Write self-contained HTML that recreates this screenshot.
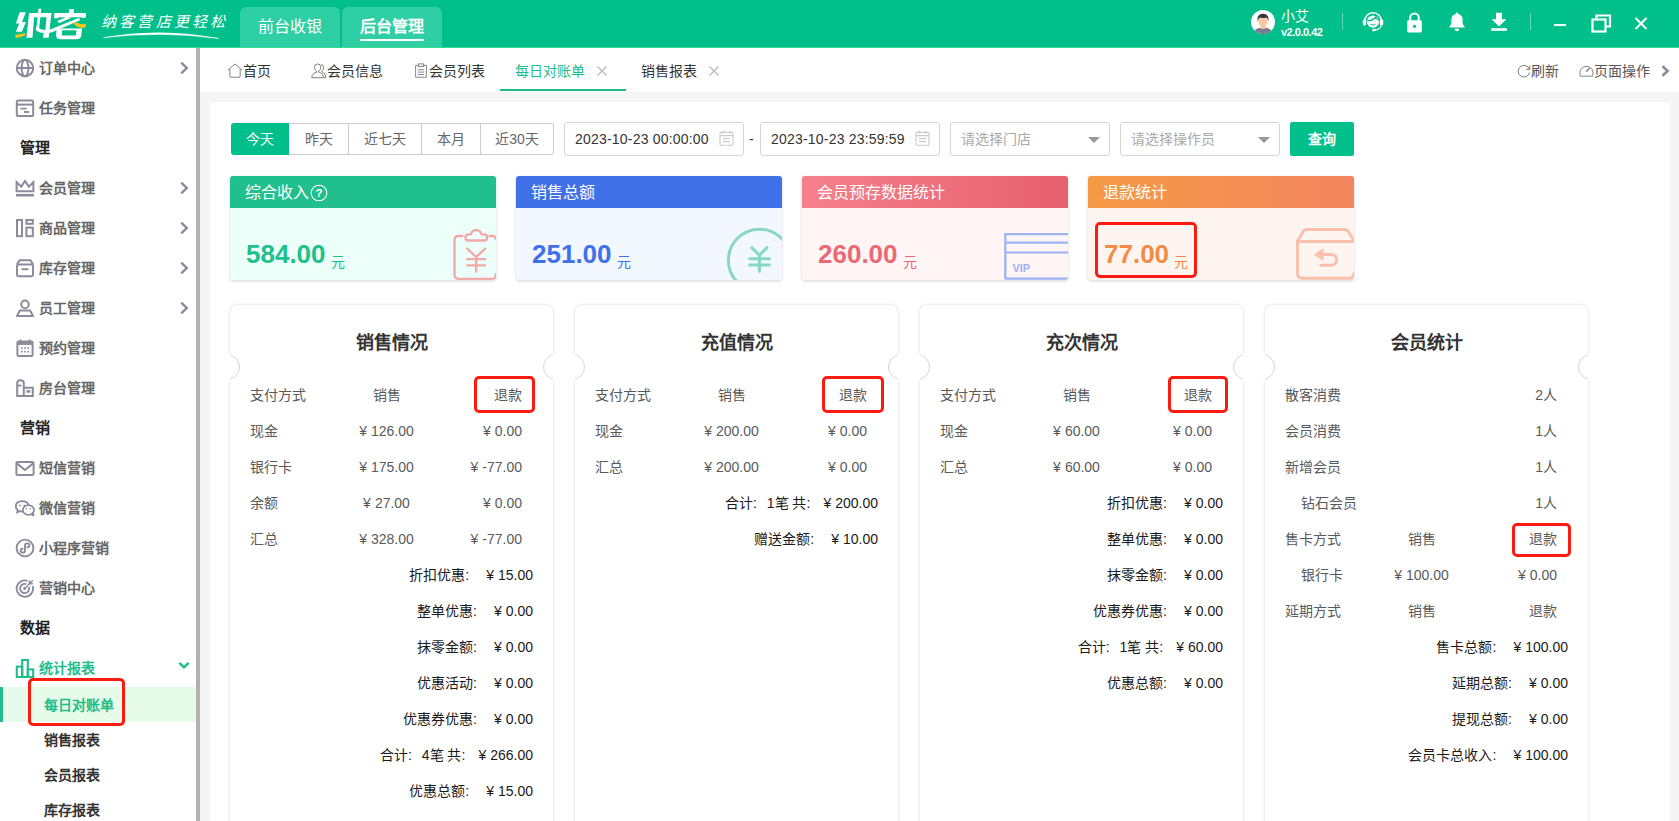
<!DOCTYPE html>
<html lang="zh-CN">
<head>
<meta charset="utf-8">
<title>每日对账单</title>
<style>
*,*:before,*:after{box-sizing:border-box;margin:0;padding:0}
html,body{width:1679px;height:821px;overflow:hidden;background:#f5f5f5}
body{font-family:"Liberation Sans",sans-serif;font-size:14px;color:#333;position:relative}
svg{display:block}
.abs{position:absolute}

/* ===== header ===== */
#hdr{position:absolute;left:0;top:0;width:1679px;height:48px;background:#00bf8a;border-bottom:1px solid #35dd8c}
#logo{position:absolute}
#slogan{position:absolute}
.htab{position:absolute;top:7px;height:40px;width:100px;background:#2ecfa4;border-radius:6px 6px 0 0;color:#fff;font-size:16px;line-height:40px;text-align:center}
.htab b{display:inline-block;position:relative}
.htab b:after{content:"";position:absolute;left:0;right:0;top:32px;height:2px;background:#fff}
#uname{position:absolute;left:1281px;top:6.5px;font-size:14px;line-height:18px;color:#fff}
#uver{position:absolute;left:1281px;top:25px;font-size:11px;line-height:14px;color:#fff;letter-spacing:-0.5px;font-weight:bold}
.hsep{position:absolute;top:13px;width:1px;height:17px;background:#5fd8b6}

/* ===== sidebar ===== */
#side{position:absolute;left:0;top:48px;width:196px;height:773px;background:#fff;overflow:hidden}
#sbar{position:absolute;left:196px;top:48px;width:4px;height:773px;background:#b2b2b2}
.mi{position:absolute;left:0;width:196px;height:40px;line-height:40px;font-size:14px;font-weight:bold;color:#666}
.mi span{position:absolute;left:39px;top:0;white-space:nowrap}
.mi svg.ic{position:absolute;left:15px;top:10px;width:20px;height:20px}
.mi svg.ch{position:absolute;left:179px;top:13px;width:10px;height:14px}
.mh{position:absolute;left:20px;height:40px;line-height:40px;font-size:15px;font-weight:bold;color:#222}
.si{position:absolute;left:0;width:196px;height:35px;line-height:35px;font-size:14px;font-weight:bold;color:#333}
.si span{position:absolute;left:44px;top:0;white-space:nowrap}
.si.on{background:#e6fbe9;color:#1fbd8a}
.si.on:before{content:"";position:absolute;left:0;top:0;width:3px;height:35px;background:#1fbd8a}
.redbox{position:absolute;border:3px solid #fd1b0f;border-radius:5px}

/* ===== tab bar ===== */
#tabs{position:absolute;left:200px;top:48px;width:1479px;height:44px;background:#fff}
.tb{position:absolute;top:0;height:44px;line-height:46px;font-size:14px;color:#333;white-space:nowrap}
.tb.on{color:#1fbd8a}
.tb svg{position:absolute}
.tr{color:#555}

/* ===== main panel ===== */
#main{position:absolute;left:210px;top:102px;width:1460px;height:719px;background:#fff}
/* filter bar */
.bg{position:absolute;left:21px;top:21px;height:32px;display:flex}
.bg div{height:32px;line-height:30px;text-align:center;font-size:14px;color:#666;border:1px solid #ccc;border-left:none;background:#fff}
.bg div:first-child{border:none;background:#00bf8a;color:#fff;line-height:32px;border-radius:3px 0 0 3px}.bg div:last-child{border-radius:0 3px 3px 0}
.inp{position:absolute;top:20px;height:34px;border:1px solid #d4d4d4;border-radius:3px;background:#fff;font-size:14px;line-height:33px;color:#333;padding-left:10px;white-space:nowrap;letter-spacing:0.2px}
.inp.ph{color:#aaa;letter-spacing:0}
.inp svg{position:absolute}
.tri{position:absolute;right:9px;top:14px;width:0;height:0;border-left:6px solid transparent;border-right:6px solid transparent;border-top:6px solid #999}
#qbtn{position:absolute;left:1080px;top:20px;width:64px;height:34px;background:#00bf8a;color:#fff;font-size:14px;font-weight:bold;line-height:35px;text-align:center;border-radius:2px}

/* stat cards */
.card{position:absolute;top:74px;width:266px;height:104px;border-radius:3px;overflow:hidden;box-shadow:0 1px 3px rgba(0,0,0,0.18)}
.card .ch{height:32px;line-height:34px;padding-left:15px;font-size:16px;color:#fff;position:relative}
.card .val{position:absolute;left:16px;top:60px;font-size:26px;font-weight:bold;line-height:36px;white-space:nowrap}
.card .val i{font-style:normal;font-weight:normal;font-size:14px;margin-left:5px;position:relative;top:4px}
.card svg.ci{position:absolute}

/* panels */
.pn{position:absolute;top:203px;width:323px;height:540px;background:#fff;border-radius:7px;box-shadow:0 0 2px 1px rgba(0,0,0,0.09)}
.pn h3{position:absolute;left:0;top:24px;width:100%;text-align:center;font-size:18px;line-height:28px;font-weight:bold;color:#333}
.nt{position:absolute;top:49px;width:26px;height:26px}
.nt:before{content:"";position:absolute;left:0;top:0;width:26px;height:26px;border-radius:50%;border:1px solid #d6d6d6;background:#fff}
.nt:after{content:"";position:absolute;top:-1px;width:17px;height:28px;background:#fff}
.nt.l{left:-16px}.nt.l:after{left:-2px;width:18px}
.nt.r{right:-16px}.nt.r:after{right:-2px;width:18px}
.rw{position:absolute;left:0;width:323px;height:36px;line-height:36px;font-size:14px;color:#5a5a5a;white-space:nowrap}
.rw .a{position:absolute;left:20px}
.rw .a.in{left:36px}
.rw .b{position:absolute;left:56.5px;width:200px;text-align:center}
.rw .c{position:absolute;right:31px;text-align:right}
.sm{position:absolute;right:20px;height:36px;line-height:36px;font-size:14px;color:#1a1a1a;white-space:nowrap;text-align:right}
.sm u{text-decoration:none;display:inline-block;width:17px}
y{margin-right:4px}
</style>
</head>
<body>

<!-- ================= HEADER ================= -->
<div id="hdr">
  <svg id="logo" style="left:5px;top:0;width:120px;height:48px" viewBox="0 0 1680 672">
    <g fill="#fff">
      <!-- 纟 zigzag -->
      <path d="M205 172 L292 172 L238 308 L292 308 L236 446 L152 446 L200 330 L152 330 Z"/>
      <!-- 内 left leg -->
      <path d="M338 182 L412 182 L384 528 L300 528 Z"/>
      <!-- 内 top bar -->
      <path d="M338 182 L650 182 L645 242 L334 242 Z"/>
      <!-- 内 right leg -->
      <path d="M588 182 L650 182 L612 528 L532 528 L536 470 L560 470 Z"/>
      <!-- 内 centre stroke -->
      <path d="M468 124 L508 124 L478 400 L440 410 Z"/>
      <!-- shared swoosh 人 / 夂 -->
      <path d="M440 372 Q520 440 640 410 L1040 250 L1050 285 L660 450 Q520 490 430 420 Z"/>
      <!-- 宀 dot -->
      <path d="M898 128 L966 128 L960 190 L892 190 Z"/>
      <!-- 宀 roof -->
      <path d="M690 182 L1136 182 L1130 250 L1068 250 L1072 240 L752 240 L748 256 L686 256 Z"/>
      <!-- 夂 short stroke -->
      <path d="M860 236 L930 250 L760 322 L728 296 Z"/>
      <!-- 口 -->
      <path d="M722 398 L1078 398 L1068 500 Q1060 548 1000 548 L780 548 Q716 548 716 500 Z M800 424 L796 496 L992 496 L1000 424 Z" fill-rule="evenodd"/>
    </g>
    <path d="M140 488 Q210 486 286 462 L282 492 Q215 528 150 532 Z" fill="#f9c21a"/>
    <path d="M958 326 Q985 308 1020 322 Q1070 348 1136 334 L1126 386 Q1060 400 1010 372 Q985 356 958 326 Z" fill="#f9c21a"/>
  </svg>
  <svg id="slogan" style="left:98px;top:0;width:132px;height:48px" viewBox="98 0 132 48">
    <text x="101" y="26.5" font-family="Liberation Serif, serif" font-size="15" font-style="italic" fill="#fff" textLength="124" lengthAdjust="spacing">纳客营店更轻松</text>
    <path d="M103.6 37.6 Q160 27.6 218.8 38.4 Q160 30.8 103.6 37.6z" fill="#fff" stroke="#fff" stroke-width="0.5"/>
  </svg>
  <div class="htab" style="left:240px">前台收银</div>
  <div class="htab" style="left:342px"><b>后台管理</b></div>

  <!-- avatar -->
  <svg class="abs" style="left:1251px;top:10px" width="24" height="24" viewBox="0 0 24 24">
    <defs><clipPath id="avc"><circle cx="12" cy="12" r="12"/></clipPath></defs>
    <circle cx="12" cy="12" r="12" fill="#fdfdfd"/>
    <g clip-path="url(#avc)">
      <path d="M2 26 q0 -8.4 10 -8.4 q10 0 10 8.4z" fill="#777a90"/>
      <rect x="9.8" y="14" width="4.4" height="5" fill="#efbd93"/>
      <ellipse cx="12" cy="11.4" rx="4.7" ry="5.3" fill="#f6c9a2"/>
      <path d="M6.6 11.4 q-1 -7.6 5.4 -7.6 q6.4 0 5.4 7.6 q-0.8 -3.4 -2 -4 q-3.4 1.2 -6.4 0.2 q-1.4 0.8 -2.4 3.8z" fill="#36343a"/>
    </g>
  </svg>
  <div id="uname">小艾</div>
  <div id="uver">v2.0.0.42</div>
  <div class="hsep" style="left:1342px"></div>
  <div class="hsep" style="left:1530px"></div>

  <!-- headset -->
  <svg class="abs" style="left:1362px;top:10px" width="22" height="23" viewBox="0 0 22 23">
    <path d="M2.6 11.2 a8.4 8.4 0 0 1 16.8 0" fill="none" stroke="#fff" stroke-width="1.6"/>
    <rect x="0.8" y="9.2" width="3.4" height="6.4" rx="1.5" fill="#fff"/>
    <rect x="17.8" y="9.2" width="3.4" height="6.4" rx="1.5" fill="#fff"/>
    <path d="M19.4 15 q-0.6 4.4 -6.4 5" fill="none" stroke="#fff" stroke-width="1.3"/>
    <ellipse cx="11.8" cy="20.1" rx="1.7" ry="1.3" fill="#fff"/>
    <circle cx="11" cy="11.6" r="6.1" fill="#fff"/>
    <path d="M5.2 10.6 q5.2 0.6 8.6 -3.6 q1.4 2.6 3 3.4" fill="none" stroke="#00bf8a" stroke-width="1.2"/>
    <path d="M9 14.4 q2 1.4 4 0" fill="none" stroke="#00bf8a" stroke-width="1.1" stroke-linecap="round"/>
  </svg>
  <!-- lock -->
  <svg class="abs" style="left:1406px;top:12px" width="17" height="21" viewBox="0 0 17 21">
    <path d="M4.2 9 v-3.2 a4.3 4.3 0 0 1 8.6 0 v3.2" fill="none" stroke="#fff" stroke-width="2"/>
    <rect x="1.2" y="8.2" width="14.6" height="12.3" rx="1.6" fill="#fff"/>
    <circle cx="8.5" cy="14.3" r="1.6" fill="#00bf8a"/>
  </svg>
  <!-- bell -->
  <svg class="abs" style="left:1448px;top:12px" width="18" height="20" viewBox="0 0 18 20">
    <path d="M9 0.6 a1.3 1.3 0 0 1 1.3 1.5 a5.6 5.6 0 0 1 4.3 5.6 v4.3 l2 2.6 v1 h-15.2 v-1 l2 -2.6 v-4.3 a5.6 5.6 0 0 1 4.3 -5.6 a1.3 1.3 0 0 1 1.3 -1.5z" fill="#fff"/>
    <path d="M6.6 16.8 h4.8 a2.4 2.4 0 0 1 -4.8 0z" fill="#fff"/>
  </svg>
  <!-- download -->
  <svg class="abs" style="left:1490px;top:12px" width="18" height="20" viewBox="0 0 18 20">
    <path d="M6 0.8 h6 v6.4 h4.4 l-7.4 7.2 l-7.4 -7.2 h4.4z" fill="#fff"/>
    <rect x="1.2" y="16.2" width="15.6" height="2.6" fill="#fff"/>
  </svg>
  <!-- window controls -->
  <div class="abs" style="left:1554px;top:24px;width:12px;height:2px;background:#fff"></div>
  <svg class="abs" style="left:1590.5px;top:13.5px" width="21" height="19" viewBox="0 0 21 19">
    <path d="M5.5 4.5 v-3 h13.5 v11 h-4" fill="none" stroke="#fff" stroke-width="2.2"/>
    <rect x="1.5" y="5.5" width="13" height="12" fill="none" stroke="#fff" stroke-width="2.2"/>
  </svg>
  <svg class="abs" style="left:1633.6px;top:17px" width="14" height="13" viewBox="0 0 14 13">
    <path d="M1.5 1 L12.5 12 M12.5 1 L1.5 12" stroke="#fff" stroke-width="2" fill="none"/>
  </svg>
</div>

<!-- ================= SIDEBAR ================= -->
<div id="side">
<svg width="0" height="0" style="position:absolute"><defs>
  <symbol id="chev" viewBox="0 0 10 14"><path d="M2.2 1.6 L7.8 7 L2.2 12.4" fill="none" stroke="#8b8b9c" stroke-width="2.4"/></symbol>
</defs></svg>

<div class="mi" style="top:0"><svg class="ic" viewBox="0 0 20 20" fill="none" stroke="#8b8b9c" stroke-width="2"><circle cx="10" cy="10" r="8.2"/><ellipse cx="10" cy="10" rx="3.4" ry="8.2"/><path d="M1.8 10 H18.2"/></svg><span>订单中心</span><svg class="ch"><use href="#chev"/></svg></div>

<div class="mi" style="top:40px"><svg class="ic" viewBox="0 0 20 20" fill="none" stroke="#8b8b9c" stroke-width="2"><rect x="1.8" y="2.4" width="16.4" height="15.6" rx="1.6"/><path d="M1.8 6.6 H18.2"/><path d="M5.4 10.6 H11.6 M9 14 H14.2" stroke-width="1.9"/></svg><span>任务管理</span></div>

<div class="mh" style="top:80px">管理</div>

<div class="mi" style="top:120px"><svg class="ic" viewBox="0 0 20 20" fill="none" stroke="#8b8b9c" stroke-width="2"><path d="M1.6 13.2 V4.2 L6.2 8.6 L10 3 L13.8 8.6 L18.4 4.2 V13.2 Z" stroke-linejoin="miter"/><path d="M1 17.2 H19" stroke-width="2.6"/></svg><span>会员管理</span><svg class="ch"><use href="#chev"/></svg></div>

<div class="mi" style="top:160px"><svg class="ic" viewBox="0 0 20 20" fill="none" stroke="#8b8b9c" stroke-width="2"><rect x="2" y="2" width="5" height="16.2"/><rect x="11.4" y="2" width="6.4" height="3.8"/><rect x="11.4" y="9.6" width="6.4" height="8.6"/></svg><span>商品管理</span><svg class="ch"><use href="#chev"/></svg></div>

<div class="mi" style="top:200px"><svg class="ic" viewBox="0 0 20 20" fill="none" stroke="#8b8b9c" stroke-width="2"><path d="M2 6.4 L4.6 2.2 H15.4 L18 6.4"/><rect x="2" y="6.4" width="16" height="11.8" rx="1.4"/><path d="M6.6 11.2 H13.4" stroke-width="1.9"/></svg><span>库存管理</span><svg class="ch"><use href="#chev"/></svg></div>

<div class="mi" style="top:240px"><svg class="ic" viewBox="0 0 20 20" fill="none" stroke="#8b8b9c" stroke-width="2"><circle cx="10" cy="6.4" r="3.8"/><path d="M2 18 L4.8 12.6 H15.2 L18 18 Z" stroke-linejoin="round"/></svg><span>员工管理</span><svg class="ch"><use href="#chev"/></svg></div>

<div class="mi" style="top:280px"><svg class="ic" viewBox="0 0 20 20" fill="none" stroke="#8b8b9c" stroke-width="2"><rect x="2.4" y="3.6" width="15.2" height="14.4" rx="1.2"/><path d="M2.4 5.4 H17.6" stroke-width="3"/><path d="M5.4 1.4 V4 M14.6 1.4 V4" stroke-width="1.8"/><path d="M6 10.2 h1.6 M9.2 10.2 h1.6 M12.4 10.2 h1.6 M6 13.6 h1.6 M9.2 13.6 h1.6 M12.4 13.6 h1.6" stroke-width="1.7"/></svg><span>预约管理</span></div>

<div class="mi" style="top:320px"><svg class="ic" viewBox="0 0 20 20" fill="none" stroke="#8b8b9c" stroke-width="2"><path d="M2.2 18 V5 Q2.2 2.2 5.4 2.2 Q8.8 2.2 8.8 5 V18 Z"/><path d="M2.2 7.6 H6.4"/><path d="M8.8 9.8 H17.8 V18 H8.8"/><path d="M11.4 13.4 h4" stroke-width="2.6"/></svg><span>房台管理</span></div>

<div class="mh" style="top:360px">营销</div>

<div class="mi" style="top:400px"><svg class="ic" viewBox="0 0 20 20" fill="none" stroke="#8b8b9c" stroke-width="2"><rect x="1.4" y="4" width="17.2" height="13" rx="1.2"/><path d="M1.8 5.4 L10 12 L18.2 5.4"/></svg><span>短信营销</span></div>

<div class="mi" style="top:440px"><svg class="ic" viewBox="0 0 20 20" fill="none" stroke="#8b8b9c" stroke-width="1.8"><path d="M8.2 13.6 Q6.6 13.8 4.6 13.2 L2.2 14.4 L2.8 12.2 Q0.8 10.6 0.8 8.4 Q0.8 3.4 7.4 3.2 Q12.4 3.4 13.6 7"/><ellipse cx="13.4" cy="12" rx="5.6" ry="4.8"/><path d="M16.4 16.2 L18.6 17.4 L18 15.2" stroke-linejoin="round"/><path d="M5 7.4 v0.4 M9.4 7.4 v0.4" stroke-width="1.6" stroke-linecap="round"/><path d="M11.4 10.8 v0.3 M15.4 10.8 v0.3" stroke-width="1.4" stroke-linecap="round"/></svg><span>微信营销</span></div>

<div class="mi" style="top:480px"><svg class="ic" viewBox="0 0 20 20" fill="none" stroke="#8b8b9c" stroke-width="1.9"><circle cx="10" cy="10" r="8.4"/><path d="M10 7.8 V12.4 Q10 14.6 7.8 14.6 Q5.6 14.6 5.6 12.6 Q5.6 10.8 7.6 10.8 M10 12.2 V7.6 Q10 5.4 12.2 5.4 Q14.4 5.4 14.4 7.4 Q14.4 9.2 12.4 9.2" stroke-linecap="round"/></svg><span>小程序营销</span></div>

<div class="mi" style="top:520px"><svg class="ic" viewBox="0 0 20 20" fill="none" stroke="#8b8b9c" stroke-width="1.9"><path d="M17.6 8 A8.2 8.2 0 1 1 12.4 2.8"/><path d="M14 9 A4.6 4.6 0 1 1 11.2 6.2"/><circle cx="9.6" cy="10.6" r="1.5" fill="#8b8b9c" stroke="none"/><path d="M9.8 10.4 L17.8 2.2 M14.4 2.4 V5.8 H17.8" stroke-width="1.5"/></svg><span>营销中心</span></div>

<div class="mh" style="top:560px">数据</div>

<div class="mi" style="top:600px;color:#1fbd8a"><svg class="ic" viewBox="0 0 20 20" fill="none" stroke="#1fbd8a" stroke-width="2.1"><rect x="1.8" y="8.6" width="5.4" height="10.4"/><rect x="7.2" y="2" width="5.6" height="17"/><rect x="12.8" y="11.4" width="5.4" height="7.6"/></svg><span>统计报表</span><svg class="ch" style="left:178px;top:13px;width:12px;height:9px" viewBox="0 0 12 9"><path d="M1.4 1.8 L6 6.4 L10.6 1.8" fill="none" stroke="#1fbd8a" stroke-width="2.4"/></svg></div>

<div class="si on" style="top:639px"><span style="top:1px">每日对账单</span></div>
<div class="si" style="top:675px"><span>销售报表</span></div>
<div class="si" style="top:710px"><span>会员报表</span></div>
<div class="si" style="top:745px"><span>库存报表</span></div>
<div class="redbox" style="left:28px;top:630px;width:97px;height:48px"></div>

</div>
<div id="sbar"></div>

<!-- ================= TAB BAR ================= -->
<div id="tabs">

<div class="tb" style="left:43px">首页<svg style="left:-16.5px;top:15px" width="16" height="15" viewBox="0 0 17 16" fill="none" stroke="#7a7a7a" stroke-width="1"><path d="M1 7.6 L8.5 1 L16 7.6"/><path d="M3 6.4 V14.2 Q3 15.2 4 15.2 H13 Q14 15.2 14 14.2 V6.4"/></svg></div>
<div class="tb" style="left:127px">会员信息<svg style="left:-16.5px;top:14.5px" width="16" height="16" viewBox="0 0 17 17" fill="none" stroke="#7a7a7a" stroke-width="1"><path d="M6.6 9.4 Q3.6 7.4 3.6 4.6 Q3.6 1 7 1 Q10.4 1 10.4 4.6 Q10.4 7.4 7.6 9.4 M6.6 9.4 Q1 10.6 0.8 15.6 H13.2 Q13 10.6 7.6 9.4"/><path d="M10.6 1.6 Q13.6 1.8 13.4 5.2 Q13.2 7.6 11.4 9.2 Q15.6 10.4 15.8 15.6 H13.4"/></svg></div>
<div class="tb" style="left:229px">会员列表<svg style="left:-15.5px;top:15px" width="14" height="15.5" viewBox="0 0 15 17" fill="none" stroke="#7a7a7a" stroke-width="1"><path d="M4.4 2.6 H1.6 V15.6 H13.4 V2.6 H10.6"/><rect x="4.6" y="1" width="5.8" height="3"/><path d="M4.2 7.4 H10.8 M4.2 10 H10.8 M4.2 12.6 H10.8"/></svg></div>
<div class="tb on" style="left:315px">每日对账单<svg style="left:81px;top:17px" width="12" height="12" viewBox="0 0 12 12"><path d="M1.5 1.5 L10.5 10.5 M10.5 1.5 L1.5 10.5" stroke="#b4b4b4" stroke-width="1.1" fill="none"/></svg></div>
<div class="abs" style="left:300px;top:41px;width:126px;height:2px;background:#1fbd8a"></div>
<div class="tb" style="left:441px">销售报表<svg style="left:67px;top:17px" width="12" height="12" viewBox="0 0 12 12"><path d="M1.5 1.5 L10.5 10.5 M10.5 1.5 L1.5 10.5" stroke="#b4b4b4" stroke-width="1.1" fill="none"/></svg></div>

<div class="tb tr" style="left:1331px">刷新<svg style="left:-14px;top:16px" width="14" height="14" viewBox="0 0 14 14" fill="none" stroke="#7a7a7a" stroke-width="1"><path d="M12.4 5.2 A5.8 5.8 0 1 0 12.6 8.6"/><path d="M12.8 1.6 V5.4 H9.2"/></svg></div>
<div class="tb tr" style="left:1394px">页面操作<svg style="left:-15px;top:15px" width="15" height="14" viewBox="0 0 15 14" fill="none" stroke="#7a7a7a" stroke-width="1"><path d="M1.4 12.6 A6.6 6.6 0 1 1 13.6 12.6"/><path d="M0.6 13.2 H14.4" stroke="#aaa" stroke-width="1.4"/><path d="M7.2 8.8 L10.6 5.2" stroke-width="1.3"/></svg></div>
<svg class="abs" style="left:1460px;top:16px" width="10" height="14" viewBox="0 0 10 14"><path d="M2.4 2.2 L7.6 7 L2.4 11.8" fill="none" stroke="#8b8b9c" stroke-width="2.6"/></svg>

</div>

<!-- ================= MAIN ================= -->
<div id="main">
<!-- filter bar -->
<div class="bg"><div style="width:58px">今天</div><div style="width:60px">昨天</div><div style="width:73px">近七天</div><div style="width:59px">本月</div><div style="width:73px">近30天</div></div>
<div class="inp" style="left:354px;width:180px">2023-10-23 00:00:00<svg style="left:154px;top:7px" width="15" height="16" viewBox="0 0 15 16" fill="none" stroke="#cacaca" stroke-width="1.1"><rect x="1" y="2.4" width="13" height="12.8" rx="1"/><path d="M1 5.6 H14 M4.2 0.8 V3.6 M10.8 0.8 V3.6 M4 8.6 H11 M4 11.6 H11"/></svg></div>
<div class="abs" style="left:539px;top:28px;font-size:14px;line-height:18px;color:#333">-</div>
<div class="inp" style="left:550px;width:180px">2023-10-23 23:59:59<svg style="left:154px;top:7px" width="15" height="16" viewBox="0 0 15 16" fill="none" stroke="#cacaca" stroke-width="1.1"><rect x="1" y="2.4" width="13" height="12.8" rx="1"/><path d="M1 5.6 H14 M4.2 0.8 V3.6 M10.8 0.8 V3.6 M4 8.6 H11 M4 11.6 H11"/></svg></div>
<div class="inp ph" style="left:740px;width:160px">请选择门店<span class="tri"></span></div>
<div class="inp ph" style="left:910px;width:160px">请选择操作员<span class="tri"></span></div>
<div id="qbtn">查询</div>

<!-- stat cards -->
<div class="card" style="left:20px;background:#ecfff9">
  <div class="ch" style="background:#21bf8b">综合收入<svg class="abs" style="left:80px;top:8px" width="18" height="18" viewBox="0 0 18 18"><circle cx="9" cy="9" r="7.8" fill="none" stroke="#fff" stroke-width="1.1"/><text x="9" y="13.2" text-anchor="middle" font-family="Liberation Sans, sans-serif" font-size="11.5" font-weight="bold" fill="#fff">?</text></svg></div>
  <div class="val" style="color:#21bf8b">584.00<i>元</i></div>
  <svg class="ci" style="left:0;top:0" width="266" height="104" viewBox="0 0 266 104" fill="none" stroke="#f1a9ab" stroke-width="2.3" stroke-linecap="round" stroke-linejoin="round"><path d="M232.4 60 H228.6 Q224.5 60 224.5 64.2 V98.8 Q224.5 102.8 228.6 102.8 H262 Q266 102.8 266 98"/><path d="M259.4 60 H262.4 Q265.6 60 265.8 63"/><path d="M238.4 64.5 H254 Q257.2 64.5 257.2 61.4 Q257.2 58.4 253.6 58.4 H251.4 Q250.6 54.2 246.2 54.2 Q241.8 54.2 241 58.4 H238.8 Q235.4 58.4 235.4 61.4 Q235.4 64.5 238.4 64.5 Z"/><path d="M237.2 72.6 L246.2 81.2 L255.2 72.6 M246.2 81.2 V95.8 M237.2 83.2 H255.2 M237.2 89.4 H255.2"/></svg>
</div>
<div class="card" style="left:306px;background:#f3f7ff">
  <div class="ch" style="background:#3f70e8">销售总额</div>
  <div class="val" style="color:#3f70e8">251.00<i>元</i></div>
  <svg class="ci" style="left:0;top:0" width="266" height="104" viewBox="0 0 266 104" fill="none" stroke="#86d9c0" stroke-width="3" stroke-linecap="round" stroke-linejoin="round"><circle cx="243.4" cy="84.2" r="31"/><path d="M235.8 71.6 L243.4 79.2 L251 71.6 M243.4 79.2 V95.2 M233.6 82.7 H253.4 M233.6 89.1 H253.4"/></svg>
</div>
<div class="card" style="left:592px;background:#fff5f5">
  <div class="ch" style="background:linear-gradient(90deg,#f5808c,#e6606e)">会员预存数据统计</div>
  <div class="val" style="color:#ea6977">260.00<i>元</i></div>
  <svg class="ci" style="left:0;top:0" width="266" height="104" viewBox="0 0 266 104" fill="none" stroke="#9db2f1" stroke-width="2.2" stroke-linejoin="round"><path d="M270 58.1 H203.3 V102.7 H270"/><path d="M203.3 66.7 H270 M203.3 76.5 H270"/><text x="210.6" y="95.8" font-family="Liberation Sans, sans-serif" font-size="10.5" font-weight="bold" fill="#9db2f1" stroke="none" textLength="17.5" lengthAdjust="spacingAndGlyphs">VIP</text></svg>
</div>
<div class="card" style="left:878px;background:#fff5f0">
  <div class="ch" style="background:linear-gradient(90deg,#f59a46,#f2855f)">退款统计</div>
  <div class="val" style="color:#f28b48">77.00<i>元</i></div>
  <svg class="ci" style="left:0;top:0" width="266" height="104" viewBox="0 0 266 104" fill="none" stroke="#f9c1ad" stroke-width="3" stroke-linecap="round" stroke-linejoin="round"><path d="M209.5 65 L215.4 55.2 Q216.6 53.5 218.6 53.5 H256.8 Q258.8 53.5 260 55.2 L266.5 65.4"/><path d="M209.5 65.4 H270"/><path d="M209.5 65 V97.6 Q209.5 102.3 214.2 102.3 H261 Q266 102.3 266 97"/><path d="M234.4 78.4 H243.3 A5.4 5.4 0 0 1 243.3 89.2 H232.8"/><path d="M226.8 78.4 L235 73 V83.8 Z" fill="#f9c1ad" stroke-width="1"/></svg>
</div>
<div class="redbox" style="left:885px;top:120px;width:102px;height:56px"></div>

<div class="pn" style="left:20px"><h3>销售情况</h3><div class="nt l"></div><div class="nt r"></div>
<div class="rw" style="top:72px"><span class="a">支付方式</span><span class="b">销售</span><span class="c">退款</span></div>
<div class="rw" style="top:108px"><span class="a">现金</span><span class="b"><y>¥</y>126.00</span><span class="c"><y>¥</y>0.00</span></div>
<div class="rw" style="top:144px"><span class="a">银行卡</span><span class="b"><y>¥</y>175.00</span><span class="c"><y>¥</y>-77.00</span></div>
<div class="rw" style="top:180px"><span class="a">余额</span><span class="b"><y>¥</y>27.00</span><span class="c"><y>¥</y>0.00</span></div>
<div class="rw" style="top:216px"><span class="a">汇总</span><span class="b"><y>¥</y>328.00</span><span class="c"><y>¥</y>-77.00</span></div>
<div class="sm" style="top:252px">折扣优惠:<u></u><y>¥</y>15.00</div>
<div class="sm" style="top:288px">整单优惠:<u></u><y>¥</y>0.00</div>
<div class="sm" style="top:324px">抹零金额:<u></u><y>¥</y>0.00</div>
<div class="sm" style="top:360px">优惠活动:<u></u><y>¥</y>0.00</div>
<div class="sm" style="top:396px">优惠券优惠:<u></u><y>¥</y>0.00</div>
<div class="sm" style="top:432px">合计:<u style="width:10px"></u>4笔 共:<u style="width:13px"></u><y>¥</y>266.00</div>
<div class="sm" style="top:468px">优惠总额:<u></u><y>¥</y>15.00</div>
</div>
<div class="pn" style="left:365px"><h3>充值情况</h3><div class="nt l"></div><div class="nt r"></div>
<div class="rw" style="top:72px"><span class="a">支付方式</span><span class="b">销售</span><span class="c">退款</span></div>
<div class="rw" style="top:108px"><span class="a">现金</span><span class="b"><y>¥</y>200.00</span><span class="c"><y>¥</y>0.00</span></div>
<div class="rw" style="top:144px"><span class="a">汇总</span><span class="b"><y>¥</y>200.00</span><span class="c"><y>¥</y>0.00</span></div>
<div class="sm" style="top:180px">合计:<u style="width:10px"></u>1笔 共:<u style="width:13px"></u><y>¥</y>200.00</div>
<div class="sm" style="top:216px">赠送金额:<u></u><y>¥</y>10.00</div>
</div>
<div class="pn" style="left:710px"><h3>充次情况</h3><div class="nt l"></div><div class="nt r"></div>
<div class="rw" style="top:72px"><span class="a">支付方式</span><span class="b">销售</span><span class="c">退款</span></div>
<div class="rw" style="top:108px"><span class="a">现金</span><span class="b"><y>¥</y>60.00</span><span class="c"><y>¥</y>0.00</span></div>
<div class="rw" style="top:144px"><span class="a">汇总</span><span class="b"><y>¥</y>60.00</span><span class="c"><y>¥</y>0.00</span></div>
<div class="sm" style="top:180px">折扣优惠:<u></u><y>¥</y>0.00</div>
<div class="sm" style="top:216px">整单优惠:<u></u><y>¥</y>0.00</div>
<div class="sm" style="top:252px">抹零金额:<u></u><y>¥</y>0.00</div>
<div class="sm" style="top:288px">优惠券优惠:<u></u><y>¥</y>0.00</div>
<div class="sm" style="top:324px">合计:<u style="width:10px"></u>1笔 共:<u style="width:13px"></u><y>¥</y>60.00</div>
<div class="sm" style="top:360px">优惠总额:<u></u><y>¥</y>0.00</div>
</div>
<div class="pn" style="left:1055px"><h3>会员统计</h3><div class="nt l"></div><div class="nt r"></div>
<div class="rw" style="top:72px"><span class="a">散客消费</span><span class="b"></span><span class="c">2人</span></div>
<div class="rw" style="top:108px"><span class="a">会员消费</span><span class="b"></span><span class="c">1人</span></div>
<div class="rw" style="top:144px"><span class="a">新增会员</span><span class="b"></span><span class="c">1人</span></div>
<div class="rw" style="top:180px"><span class="a in">钻石会员</span><span class="b"></span><span class="c">1人</span></div>
<div class="rw" style="top:216px"><span class="a">售卡方式</span><span class="b">销售</span><span class="c">退款</span></div>
<div class="rw" style="top:252px"><span class="a in">银行卡</span><span class="b"><y>¥</y>100.00</span><span class="c"><y>¥</y>0.00</span></div>
<div class="rw" style="top:288px"><span class="a">延期方式</span><span class="b">销售</span><span class="c">退款</span></div>
<div class="sm" style="top:324px">售卡总额:<u></u><y>¥</y>100.00</div>
<div class="sm" style="top:360px">延期总额:<u></u><y>¥</y>0.00</div>
<div class="sm" style="top:396px">提现总额:<u></u><y>¥</y>0.00</div>
<div class="sm" style="top:432px">会员卡总收入:<u></u><y>¥</y>100.00</div>
</div>
<div class="redbox" style="left:264px;top:274px;width:61px;height:37px"></div>
<div class="redbox" style="left:612px;top:274px;width:62px;height:37px"></div>
<div class="redbox" style="left:958px;top:274px;width:60px;height:37px"></div>
<div class="redbox" style="left:1302px;top:421px;width:59px;height:34px"></div>

</div>

</body>
</html>
